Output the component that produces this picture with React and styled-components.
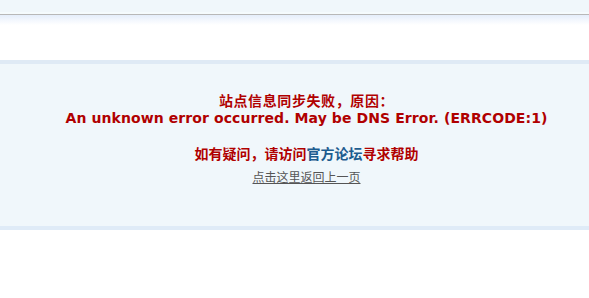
import styled, { createGlobalStyle } from "styled-components";

const GlobalStyle = createGlobalStyle`
  html, body {
    margin: 0;
    padding: 0;
    background: #fff;
  }
  body {
    font-family: "DejaVu Sans", Verdana, "Noto Sans CJK SC", sans-serif;
    font-size: 12px;
  }
`;

const TopBar = styled.div`
  height: 12px;
  background: #f0f7fb;
  border-bottom: 2px solid #f5fbfd;
  box-shadow: 0 1px 0 #b8b8b8;
  margin-bottom: 1px;
`;

const TopFade = styled.div`
  height: 10px;
  background: linear-gradient(#e5eefb, #ffffff);
`;

const Spacer = styled.div`
  height: 35px;
`;

const MessageBox = styled.div`
  background: #f0f7fb;
  border-top: 4px solid #dfeaf5;
  border-bottom: 4px solid #dfebf7;
  height: 162px;
  box-sizing: content-box;
  padding-left: 24px;
  text-align: center;
`;

const Inner = styled.div`
  padding-top: 29px;
`;

const Line = styled.p`
  margin: ${(p) => p.$top || 0}px 0 0;
  color: ${(p) => p.$color || "#b00000"};
  font-size: ${(p) => p.$size || 14}px;
  font-weight: ${(p) => (p.$bold ? 700 : 400)};
  line-height: ${(p) => p.$lh || 17}px;
  letter-spacing: ${(p) => p.$spacing || 0}px;
  white-space: nowrap;
`;

const ForumLink = styled.a`
  color: #1d5c8f;
  text-decoration: none;
`;

const BackLink = styled.a`
  color: #555;
  text-decoration: underline;
`;

export default function App() {
  return (
    <>
      <GlobalStyle />
      <TopBar />
      <TopFade />
      <Spacer />
      <MessageBox>
        <Inner>
          <Line $bold $spacing={0.6}>站点信息同步失败，原因：</Line>
          <Line $bold $spacing={0.09}>
            An unknown error occurred. May be DNS Error. (ERRCODE:1)
          </Line>
          <Line $bold $top={19}>
            如有疑问，请访问<ForumLink href="#">官方论坛</ForumLink>寻求帮助
          </Line>
          <Line $top={7} $size={12} $lh={16} $color="#555">
            <BackLink href="#">点击这里返回上一页</BackLink>
          </Line>
        </Inner>
      </MessageBox>
    </>
  );
}
